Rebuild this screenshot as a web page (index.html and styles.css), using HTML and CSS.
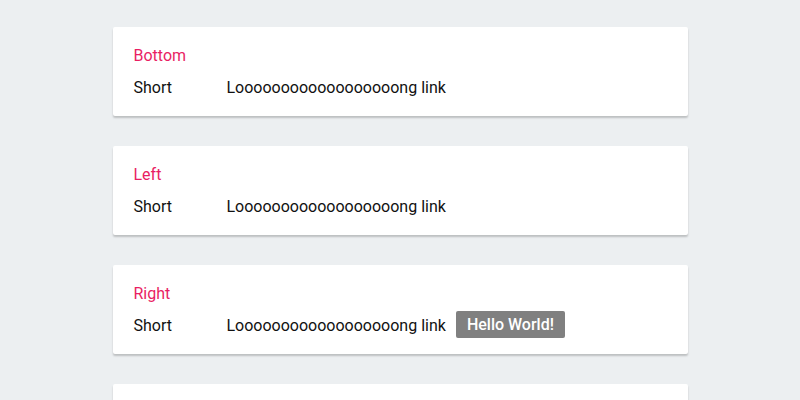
FILE: index.html
```html
<!DOCTYPE html>
<html>
<head>
<meta charset="utf-8">
<link rel="stylesheet" href="styles.css">
</head>
<body>
<div class="page">
  <div class="card">
    <div class="title">Bottom</div>
    <div class="row"><span class="short">Short</span><span class="long">Loooooooooooooooooong link</span></div>
  </div>
  <div class="card">
    <div class="title">Left</div>
    <div class="row"><span class="short">Short</span><span class="long">Loooooooooooooooooong link</span></div>
  </div>
  <div class="card">
    <div class="title">Right</div>
    <div class="row"><span class="short">Short</span><span class="long">Loooooooooooooooooong link</span><span class="tip">Hello World!</span></div>
  </div>
  <div class="card card-empty"></div>
</div>
</body>
</html>
```
FILE: styles.css
```css
html, body {
  margin: 0;
  padding: 0;
  background: #eceff1;
  font-family: Roboto, "Liberation Sans", sans-serif;
}
.page {
  width: 575px;
  margin: 0 auto;
  padding-top: 27px;
  display: flex;
  flex-direction: column;
  gap: 30px;
}
.card {
  background: #fff;
  border-radius: 2px;
  box-shadow: 0 2px 2px rgba(0,0,0,0.2);
  padding: 17px 21px 16px;
  display: flex;
  flex-direction: column;
  gap: 8px;
}
.card-empty {
  height: 56px;
}
.title {
  color: #e91e63;
  font-size: 16px;
  line-height: 24px;
}
.row {
  display: flex;
  align-items: center;
  font-size: 16px;
  line-height: 24px;
  color: #111;
}
.short {
  width: 93px;
}
.tip {
  margin-left: 10px;
  background: #808080;
  color: #fff;
  font-weight: 500;
  border-radius: 2px;
  padding: 0 11px;
  line-height: 27px;
  height: 27px;
  margin-top: -3px;
}
```
